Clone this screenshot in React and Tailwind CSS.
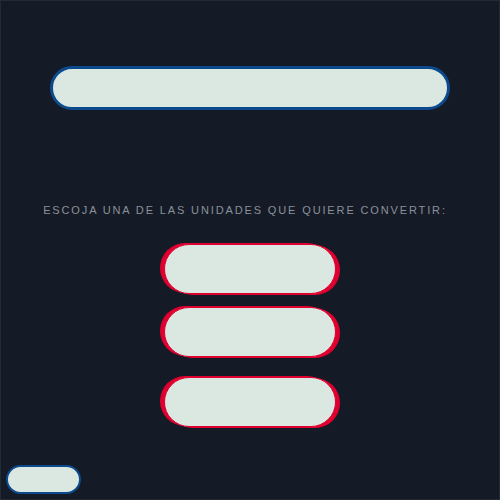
export default function App() {
  const unitBtn =
    'h-[50px] w-[172px] rounded-full border border-[#e0002f] bg-[#dbe7e1] shadow-[-4px_-1px_0_#e0002f,4px_1px_0_#e0002f]'

  return (
    <div className="flex h-[500px] w-[500px] flex-col border border-[#222a36] bg-[#151b26] font-['Liberation_Sans',sans-serif]">
      <div className="mx-auto mt-[65px] h-[44px] w-[400px] rounded-full border-[3px] border-[#0b4a8c] bg-[#dbe7e1]" />

      <p className="mt-[93px] pr-[10px] text-center text-[11px] leading-[14px] tracking-[0.17em] text-[#8b9099]">
        ESCOJA UNA DE LAS UNIDADES QUE QUIERE CONVERTIR:
      </p>

      <div className="mt-[27px] flex flex-col items-center">
        <button type="button" className={unitBtn} />
        <button type="button" className={`${unitBtn} mt-[13px]`} />
        <button type="button" className={`${unitBtn} mt-[20px]`} />
      </div>

      <div className="ml-[5px] mt-[38px] h-[29px] w-[75px] rounded-full border-2 border-[#0b4a8c] bg-[#dbe7e1]" />
    </div>
  )
}
